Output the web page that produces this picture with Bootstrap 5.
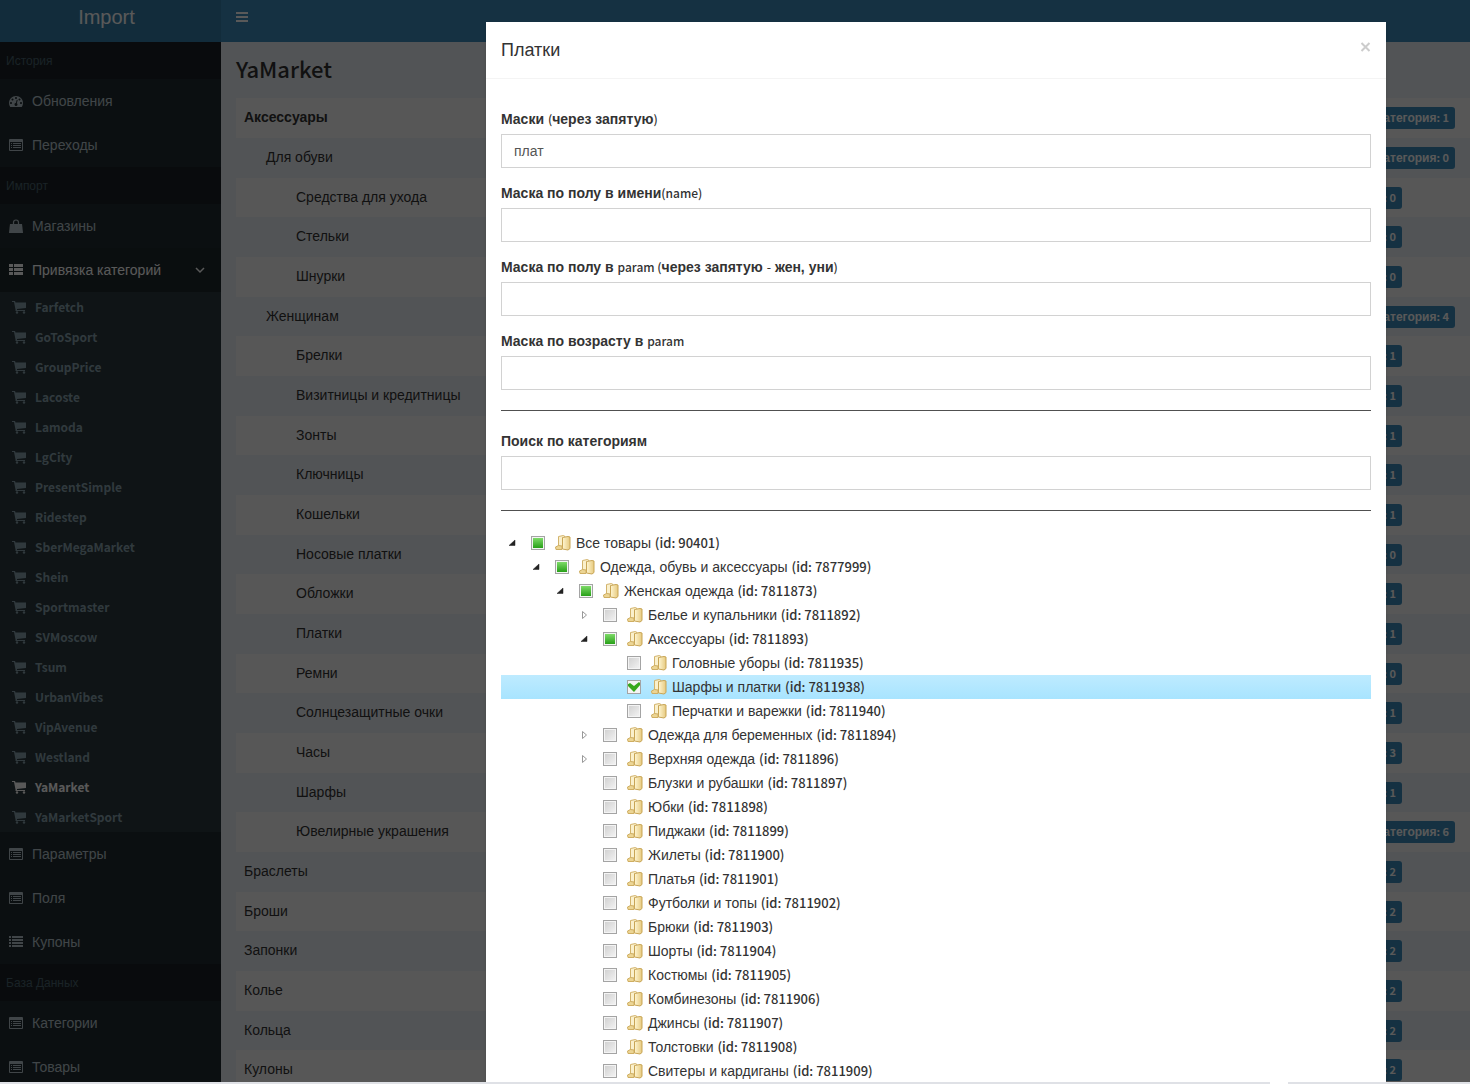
<!DOCTYPE html>
<html lang="ru">
<head>
<meta charset="utf-8">
<meta name="viewport" content="width=device-width, initial-scale=1">
<title>Import</title>
<link href="https://cdn.jsdelivr.net/npm/bootstrap@5.3.0/dist/css/bootstrap.min.css" rel="stylesheet">
<style>
body{font-family:"Liberation Sans",Arial,sans-serif;font-size:14px;line-height:20px;color:#333;background:#ecf0f5}
/* Latin letters and digits */
.lat{font-family:"Noto Sans CJK JP","Noto Sans",sans-serif;font-size:13px;line-height:1;font-weight:500}
.app{height:100vh}
.stage{min-height:0}
.side{width:221px;background:#222d32}
.brand{height:42px;background:#367fa9;color:#fff;font-size:20px;line-height:34px;padding-right:8px}
.topbar{height:42px;background:#3c8dbc}
.topbar button{color:#fff;line-height:0;padding:0 0 8px 15px}
.side-head{height:37px;line-height:39px;padding-left:6px;font-size:12px;color:#4b646f;background:#1a2226}
.side-link{height:44px;padding-left:9px;gap:9px;color:#b8c7ce}
.side-link.open{background:#1e282c;color:#fff}
.side-link .chev{margin:0 14px 0 auto}
.side-sub{background:#2c3b41}
.side-sub a{height:30px;padding-left:12px;gap:9px;color:#8aa4af}
.side-sub .lat{font-size:12px;font-weight:700}
.side-sub a.now{color:#fff}
.page-title{font-size:22px;line-height:28px;margin:15px 0 13px;padding-left:15px}
.page-title .lat{font-size:22px}
.cat-wrap{padding-left:15px}
.cats{color:#333;width:100%}
.cats tr{height:40px}
.cats tr:nth-child(3n){height:39px}
.cats tr:nth-child(odd){background:#f9f9f9}
.cats td{padding:0 15px 0 8px;line-height:20px}
.cats td:first-child{padding-bottom:2px}
.cats .lv1{padding-left:30px}
.cats .lv2{padding-left:60px}
.cats .tally{background:#3c8dbc;color:#fff;border-radius:3px;height:22px;padding:0 6px;font-size:12px;line-height:22px;font-weight:700}
.cats .tally .lat{font-size:11px;font-weight:700}
.cats .short{margin-right:53px}
.shade{background:rgba(0,0,0,.65)}
.dialog{width:900px;max-width:94%;margin:22px 84px 0 auto;min-height:100%;background:#fff;box-shadow:0 2px 3px rgba(0,0,0,.13)}
.dialog header{height:57px;padding:0 15px;border-bottom:1px solid #f4f4f4}
.dialog h4{font-size:18px;line-height:24px;margin:0}
.dialog .shut{color:#ccc;line-height:0;padding:0 0 7px}
.dialog .inner{padding:30px 15px 0}
.dialog label.cap{display:block;font-weight:700;margin-bottom:5px;line-height:20px}
.dialog label.cap .lat{font-size:12px}
.dialog .form-control{height:34px;border:1px solid #d2d2d2;border-radius:0;padding:6px 12px;font-size:14px;line-height:20px;color:#555}
.fgroup{margin-bottom:15px}
.dialog hr{margin:20px 0;border-top:1px solid #505050;opacity:1}
.tree li{height:24px}
.tree li.on{background:linear-gradient(#beebff,#a8e4ff)}
.tree .tog{width:24px;height:24px}
.tree .box{width:14px;height:14px;margin:0 5px 0 6px;appearance:none;border:1px solid #a4a4a4;background:linear-gradient(135deg,#cfcfcf,#f4f4f4);box-shadow:inset 0 0 0 1px #f4f4f4}
.tree .box.part{background:linear-gradient(#86e070,#1f9a10);box-shadow:inset 0 0 0 1px #f2f6f2}
.tree .box:checked{background:url("data:image/svg+xml,%3Csvg xmlns='http://www.w3.org/2000/svg' viewBox='0 0 14 14'%3E%3Cpath d='M0 5l3-2 4 3 5-4 2 2-7 8z' fill='%2335a81c'/%3E%3C/svg%3E") center/14px 14px no-repeat border-box #f4f4f4;box-shadow:none}
.tree label{padding-left:5px;line-height:24px}
.tree svg.fold{margin-left:5px}
.strip{height:2px;background:#dfe1e6;padding-right:182px}
.strip span{width:18px;background:#fff}
</style>
<script src="https://cdn.jsdelivr.net/npm/bootstrap@5.3.0/dist/js/bootstrap.bundle.min.js"></script>
</head>
<body>
<svg class="position-absolute" width="0" height="0" xmlns="http://www.w3.org/2000/svg" aria-hidden="true">
<defs><linearGradient id="g-fold"><stop offset="0" stop-color="#fff6d2"/><stop offset="1" stop-color="#e6c97e"/></linearGradient></defs>
<symbol id="i-dash" viewBox="0 0 1792 1792"><path d="M384 1152q0-53-37.500-90.500t-90.500-37.500-90.500 37.500-37.500 90.500 37.500 90.500 90.500 37.500 90.500-37.500 37.500-90.500zm192-448q0-53-37.500-90.500t-90.500-37.500-90.500 37.500-37.500 90.500 37.500 90.500 90.500 37.500 90.500-37.500 37.500-90.500zm428 481l101-382q6-26-7.500-48.500t-38.500-29.500-48 6.500-30 39.500l-101 382q-60 5-107 43.500t-63 98.500q-20 77 20 146t117 89 146-20 89-117q16-60-6-117t-72-91zm660-33q0-53-37.500-90.500t-90.500-37.500-90.500 37.500-37.500 90.500 37.500 90.500 90.500 37.500 90.500-37.500 37.500-90.500zm-640-640q0-53-37.500-90.500t-90.500-37.500-90.500 37.500-37.500 90.500 37.500 90.500 90.500 37.500 90.500-37.500 37.500-90.500zm448 192q0-53-37.500-90.500t-90.500-37.500-90.500 37.500-37.500 90.500 37.500 90.500 90.500 37.500 90.500-37.500 37.500-90.500zm320 448q0 261-141 483-19 29-54 29h-1402q-35 0-54-29-141-221-141-483 0-182 71-348t191-286 286-191 348-71 348 71 286 191 191 286 71 348z"/></symbol>
<symbol id="i-cart" viewBox="0 0 14 14"><path d="M0 1h3l.5 1.500H14V8L5 9v1h8v1H3.500V9.500L2 2H0z"/><circle cx="5" cy="12.500" r="1.200"/><circle cx="12" cy="12.500" r="1.200"/></symbol>
<symbol id="i-alt" viewBox="0 0 14 14"><path fill-rule="evenodd" d="M1 1h12q1 0 1 1v10q0 1-1 1H1q-1 0-1-1V2q0-1 1-1zM1 4v8h12V4zM2 5h1v1H2zM4 5h8v1H4zM2 7h1v1H2zM4 7h8v1H4zM2 9h1v1H2zM4 9h8v1H4z"/></symbol>
<symbol id="i-bag" viewBox="0 0 14 14"><path d="M1 5h12l1 8.500q0 .5-.5.5H.5q-.5 0-.5-.5z"/><path d="M4.500 7V3.500a2.500 2.500 0 0 1 5 0V7" fill="none" stroke="currentColor" stroke-width="1.200"/></symbol>
<symbol id="i-thlist" viewBox="0 0 14 14"><path d="M0 1h4v3H0zM5 1h9v3H5zM0 5h4v3H0zM5 5h9v3H5zM0 9h4v3H0zM5 9h9v3H5z"/></symbol>
<symbol id="i-list" viewBox="0 0 14 14"><path d="M0 1h2v2H0zM3 1h11v2H3zM0 4h2v2H0zM3 4h11v2H3zM0 7h2v2H0zM3 7h11v2H3zM0 10h2v2H0zM3 10h11v2H3z"/></symbol>
<symbol id="i-fold" viewBox="0 0 16 16"><path d="M3.500 1.500l5-1 1.500 1v12H3.500z" fill="#faf0cc" stroke="#d2b36c"/><path d="M7.500 2.500L13 1.500l2 .5v11.500l-2 1.500-5.500-1z" fill="url(#g-fold)" stroke="#c8a555"/><path d="M.5 12l3-1.500 3.500.5v3.500H1z" fill="#ecd594" stroke="#cfae62"/></symbol>
</svg>

<div class="app d-flex flex-column overflow-hidden">
 <div class="stage flex-grow-1 position-relative overflow-hidden">
  <div class="d-flex h-100">
   <aside class="side flex-shrink-0">
    <div class="brand text-center">Import</div>
    <nav id="menu"></nav>
   </aside>
   <main class="flex-grow-1">
    <div class="topbar d-flex align-items-center"><button class="btn border-0" type="button" aria-label="Меню"><svg width="12" height="12" fill="currentColor"><path d="M0 1h12v2H0zM0 5h12v2H0zM0 9h12v2H0z"/></svg></button></div>
    <h1 class="page-title"><span class="lat">YaMarket</span></h1>
    <div class="cat-wrap"><table class="cats"><tbody id="cats"></tbody></table></div>
   </main>
  </div>
  <div class="shade position-absolute top-0 start-0 w-100 h-100 overflow-hidden">
   <div class="dialog" role="dialog" aria-labelledby="dlg-title">
    <header class="d-flex justify-content-between align-items-center">
     <h4 id="dlg-title">Платки</h4>
     <button class="btn border-0 shut" type="button" aria-label="Закрыть"><svg width="11" height="10" viewBox="0 0 11 10" stroke="currentColor" stroke-width="2"><path d="M1.500 1l8 8M9.500 1l-8 8"/></svg></button>
    </header>
    <div class="inner">
     <div class="fgroup"><label class="cap" for="f1">Маски <span class="lat">(</span>через запятую<span class="lat">)</span></label><input id="f1" class="form-control" type="text" value="плат"></div>
     <div class="fgroup"><label class="cap" for="f2">Маска по полу в имени<span class="lat">(name)</span></label><input id="f2" class="form-control" type="text"></div>
     <div class="fgroup"><label class="cap" for="f3">Маска по полу в <span class="lat">param (</span>через запятую <span class="lat">-</span> жен, уни<span class="lat">)</span></label><input id="f3" class="form-control" type="text"></div>
     <div class="fgroup"><label class="cap" for="f4">Маска по возрасту в <span class="lat">param</span></label><input id="f4" class="form-control" type="text"></div>
     <hr>
     <div class="fgroup"><label class="cap" for="f5">Поиск по категориям</label><input id="f5" class="form-control" type="text"></div>
     <hr>
     <ul class="tree list-unstyled mb-0" id="tree"></ul>
    </div>
   </div>
  </div>
 </div>
 <div class="strip d-flex justify-content-end flex-shrink-0"><span></span></div>
</div>

<script>
const icon = (n, s = 14) => `<svg width="${s}" height="${s}" fill="currentColor" aria-hidden="true"><use href="#i-${n}"/></svg>`;
const head = t => `<div class="side-head">${t}</div>`;
const link = (n, t) => `<a href="#" class="side-link d-flex align-items-center text-decoration-none">${icon(n)}<span>${t}</span></a>`;
const shops = 'Farfetch GoToSport GroupPrice Lacoste Lamoda LgCity PresentSimple Ridestep SberMegaMarket Shein Sportmaster SVMoscow Tsum UrbanVibes VipAvenue Westland YaMarket YaMarketSport'.split(' ');
document.getElementById('menu').innerHTML =
 head('История') + link('dash', 'Обновления') + link('alt', 'Переходы') +
 head('Импорт') + link('bag', 'Магазины') +
 `<a href="#" class="side-link open d-flex align-items-center text-decoration-none">${icon('thlist')}<span>Привязка категорий</span><svg class="chev" width="14" height="14" fill="none" stroke="currentColor" stroke-width="1.500"><path d="M3 5l4 4 4-4"/></svg></a>` +
 '<div class="side-sub">' + shops.map(s => `<a href="#" class="d-flex align-items-center text-decoration-none${s === 'YaMarket' ? ' now' : ''}">${icon('cart')}<span class="lat">${s}</span></a>`).join('') + '</div>' +
 link('alt', 'Параметры') + link('alt', 'Поля') + link('list', 'Купоны') +
 head('База Данных') + link('alt', 'Категории') + link('alt', 'Товары');

/* name, level, counter, long badge */
const cats = [['<b>Аксессуары</b>',0,1,1],['Для обуви',1,0,1],['Средства для ухода',2,0],['Стельки',2,0],['Шнурки',2,0],['Женщинам',1,4,1],['Брелки',2,1],['Визитницы и кредитницы',2,1],['Зонты',2,1],['Ключницы',2,1],['Кошельки',2,1],['Носовые платки',2,0],['Обложки',2,1],['Платки',2,1],['Ремни',2,0],['Солнцезащитные очки',2,1],['Часы',2,3],['Шарфы',2,1],['Ювелирные украшения',2,6,1],['Браслеты',0,2],['Броши',0,2],['Запонки',0,2],['Колье',0,2],['Кольца',0,2],['Кулоны',0,2]];
document.getElementById('cats').innerHTML = cats.map(([t, l, n, w]) =>
 `<tr><td class="lv${l}">${t}</td><td><div class="d-flex justify-content-end"><span class="tally${w ? '' : ' short'}">${w ? 'Подкатегория' : 'Маски'}<span class="lat">: ${n}</span></span></div></td></tr>`).join('');

/* name, id, level, arrow (o open, c closed), box (p partial, x checked) */
const nodes = [['Все товары',90401,0,'o','p'],['Одежда, обувь и аксессуары',7877999,1,'o','p'],['Женская одежда',7811873,2,'o','p'],['Белье и купальники',7811892,3,'c'],['Аксессуары',7811893,3,'o','p'],['Головные уборы',7811935,4],['Шарфы и платки',7811938,4,'','x'],['Перчатки и варежки',7811940,4],['Одежда для беременных',7811894,3,'c'],['Верхняя одежда',7811896,3,'c'],['Блузки и рубашки',7811897,3],['Юбки',7811898,3],['Пиджаки',7811899,3],['Жилеты',7811900,3],['Платья',7811901,3],['Футболки и топы',7811902,3],['Брюки',7811903,3],['Шорты',7811904,3],['Костюмы',7811905,3],['Комбинезоны',7811906,3],['Джинсы',7811907,3],['Толстовки',7811908,3],['Свитеры и кардиганы',7811909,3]];
const arrow = {o:'<path d="M14 9v5.500H8z" fill="#222" stroke="#222" stroke-width=".5"/>', c:'<path d="M9.500 8.500v7l4-3.500z" fill="#fff" stroke="#999"/>'};
document.getElementById('tree').innerHTML = nodes.map(([t, id, l, a, b]) =>
 `<li class="d-flex align-items-center${b === 'x' ? ' on' : ''}" style="padding-left:${l * 24}px"><svg class="tog" aria-hidden="true">${arrow[a] || ''}</svg><input class="box${b === 'p' ? ' part' : ''}" type="checkbox" id="n${id}"${b === 'x' ? ' checked' : ''}><svg class="fold" width="16" height="16" aria-hidden="true"><use href="#i-fold"/></svg><label for="n${id}">${t} <span class="lat">(id: ${id})</span></label></li>`).join('');
</script>
</body>
</html>
